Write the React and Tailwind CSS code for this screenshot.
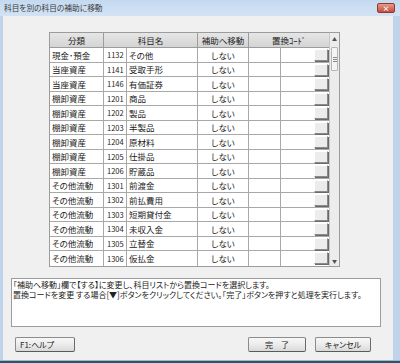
const rows = [
  ['現金･預金', '1132', 'その他'],
  ['当座資産', '1141', '受取手形'],
  ['当座資産', '1146', '有価証券'],
  ['棚卸資産', '1201', '商品'],
  ['棚卸資産', '1202', '製品'],
  ['棚卸資産', '1203', '半製品'],
  ['棚卸資産', '1204', '原材料'],
  ['棚卸資産', '1205', '仕掛品'],
  ['棚卸資産', '1206', '貯蔵品'],
  ['その他流動', '1301', '前渡金'],
  ['その他流動', '1302', '前払費用'],
  ['その他流動', '1303', '短期貸付金'],
  ['その他流動', '1304', '未収入金'],
  ['その他流動', '1305', '立替金'],
  ['その他流動', '1306', '仮払金'],
]

const font = "font-['Noto_Sans_CJK_JP','Noto_Sans',sans-serif] [font-feature-settings:'palt']"

function DropButton() {
  return (
    <div className="ml-auto mr-[1px] mt-[1px] h-[12px] w-[14px] border border-t-white border-l-white border-b-[#8a8a8a] border-r-[#8a8a8a] bg-[#ececec] shadow-[1px_1px_0_#6a6a6a]" />
  )
}

function Scrollbar() {
  return (
    <div className="flex w-[10px] flex-col border-l border-[#c8c8c8] bg-[#ececec]">
      <div className="flex h-[11px] items-center justify-center text-[5px] leading-none text-[#505050]">▲</div>
      <div className="mx-[1px] mt-[3px] flex h-[24px] flex-col items-center justify-center gap-[1px] rounded-[1px] border border-[#b5b5b5] bg-[#f4f4f4]">
        <div className="h-px w-[4px] bg-[#8a8a8a]" />
        <div className="h-px w-[4px] bg-[#8a8a8a]" />
        <div className="h-px w-[4px] bg-[#8a8a8a]" />
      </div>
      <div className="flex-1" />
      <div className="flex h-[11px] items-center justify-center text-[5px] leading-none text-[#505050]">▼</div>
    </div>
  )
}

function WinButton({ children, className }) {
  return (
    <button
      type="button"
      className={`h-[15px] rounded-[2px] border border-[#8c8c8c] border-b-[#5a5a5a] border-r-[#6a6a6a] bg-gradient-to-b from-[#f7f7f7] via-[#ececec] to-[#d9d9d9] text-[8px] leading-none text-[#222] ${className}`}
    >
      {children}
    </button>
  )
}

export default function App() {
  return (
    <div className={`flex h-[363px] w-[400px] flex-col overflow-hidden bg-[#bfd4ea] ${font}`}>
      <div className="flex h-[16px] items-center bg-gradient-to-b from-[#c4d9f0] to-[#d3e3f4] pl-[4px] pr-[5px]">
        <span className="text-[7.7px] leading-none text-[#3a3a3a]">科目を別の科目の補助に移動</span>
        <div className="ml-auto flex h-[10px] w-[18px] items-center justify-center rounded-[2px] border border-[#8f3b32] bg-gradient-to-b from-[#e59a8c] to-[#c54a3c] text-[7px] font-bold leading-none text-white">
          ×
        </div>
      </div>

      <div className="flex flex-1 pl-[3px] pr-[7px]">
        <div className="flex flex-1 flex-col bg-[#f0f0f0]">
          <div className="ml-[46px] mt-[16px] flex h-[235px] w-[291px] border border-[#9c9c9c] bg-white">
            <div className="flex w-[280px] flex-col text-[8.5px] leading-none text-[#222]">
              <div className="flex h-[15.5px] border-b border-[#9c9c9c] bg-gradient-to-b from-[#e6e6e6] to-[#d4d4d4]">
                <div className="flex w-[54px] items-center justify-center border-r border-[#9c9c9c]">分類</div>
                <div className="flex w-[94px] items-center justify-center border-r border-[#9c9c9c]">科目名</div>
                <div className="flex w-[51px] items-center justify-center border-r border-[#9c9c9c]">補助へ移動</div>
                <div className="flex flex-1 items-center justify-center">置換ｺｰﾄﾞ</div>
              </div>
              {rows.map(([kind, code, name]) => (
                <div key={code} className="flex h-[14.6px] border-b border-[#a8a8a8] last:border-b-0">
                  <div className="flex w-[54px] items-center border-r border-[#a8a8a8] pl-[2px]">{kind}</div>
                  <div className="flex w-[23px] items-center border-r border-[#a8a8a8] pl-[3px] text-[7.5px]">{code}</div>
                  <div className="flex w-[71px] items-center border-r border-[#a8a8a8] pl-[2px]">{name}</div>
                  <div className="flex w-[51px] items-center justify-center border-r border-[#a8a8a8]">しない</div>
                  <div className="w-[32px] border-r border-[#a8a8a8]" />
                  <div className="flex flex-1 items-start">
                    <DropButton />
                  </div>
                </div>
              ))}
            </div>
            <Scrollbar />
          </div>

          <div className="ml-[8px] mt-[11px] h-[49px] w-[370px] border border-[#9c9c9c] bg-white px-[1px] pt-[1px] text-[8px] leading-[10px] text-[#222]">
            <p>「補助へ移動」欄で【する】に変更し、科目リストから置換コードを選択します。</p>
            <p>置換コードを変更 する場合[▼]ボタンをクリックしてください。「完了」ボタンを押すと処理を実行します。</p>
          </div>

          <div className="mt-[10px] flex">
            <WinButton className="ml-[12px] w-[60px] pl-[4px] text-left">F1:ヘルプ</WinButton>
            <WinButton className="ml-auto w-[58px] text-center">完　了</WinButton>
            <WinButton className="ml-[9px] mr-[22px] w-[56px] text-center">キャンセル</WinButton>
          </div>
        </div>
      </div>
      <div className="h-[1px] bg-[#9fb8d2]" />
      <div className="h-[2px] bg-[#2d5566]" />
    </div>
  )
}
